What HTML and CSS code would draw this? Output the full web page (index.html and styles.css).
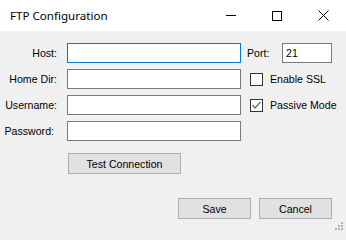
FILE: index.html
```html
<!DOCTYPE html>
<html>
<head>
<meta charset="utf-8">
<link rel="stylesheet" href="styles.css">
</head>
<body>
<div class="window">
  <div class="titlebar">
    <span class="title">FTP Configuration</span>
    <div class="caption-buttons">
      <span class="cap-btn"><svg width="10" height="10" viewBox="0 0 10 10"><line x1="0" y1="4.5" x2="10" y2="4.5" stroke="#000" stroke-width="1"/></svg></span>
      <span class="cap-btn"><svg width="10" height="10" viewBox="0 0 10 10"><rect x="0.5" y="0.5" width="9" height="9" fill="none" stroke="#000" stroke-width="1"/></svg></span>
      <span class="cap-btn"><svg width="11" height="11" viewBox="0 0 11 11"><path d="M0.5 0.5 L10.5 10.5 M10.5 0.5 L0.5 10.5" stroke="#000" stroke-width="1" fill="none"/></svg></span>
    </div>
  </div>
  <div class="client">
    <div class="form">
      <label class="lbl">Host:</label>
      <div class="field"><span class="input focused"></span></div>
      <div class="side port">
        <span class="side-text">Port:</span>
        <span class="input port-input">21</span>
      </div>

      <label class="lbl">Home Dir:</label>
      <div class="field"><span class="input"></span></div>
      <div class="side check">
        <span class="box"></span>
        <span class="side-text">Enable SSL</span>
      </div>

      <label class="lbl">Username:</label>
      <div class="field"><span class="input"></span></div>
      <div class="side check">
        <span class="box checked"><svg width="11" height="11" viewBox="0 0 11 11"><polyline points="1.5,5 4,8 9.5,2" fill="none" stroke="#6b6b6b" stroke-width="1.2"/></svg></span>
        <span class="side-text">Passive Mode</span>
      </div>

      <label class="lbl lbl-pw">Password:</label>
      <div class="field"><span class="input"></span></div>
      <div class="side"></div>
    </div>
    <div class="test-row">
      <button class="btn btn-test">Test Connection</button>
    </div>
    <div class="actions">
      <button class="btn">Save</button>
      <button class="btn">Cancel</button>
    </div>
    <svg class="grip" width="9" height="9" viewBox="0 0 9 9">
      <rect x="6" y="0" width="2" height="2" fill="#b4b4b4"/>
      <rect x="3" y="3" width="2" height="2" fill="#b4b4b4"/>
      <rect x="6" y="3" width="2" height="2" fill="#b4b4b4"/>
      <rect x="0" y="6" width="2" height="2" fill="#b4b4b4"/>
      <rect x="3" y="6" width="2" height="2" fill="#b4b4b4"/>
      <rect x="6" y="6" width="2" height="2" fill="#b4b4b4"/>
    </svg>
  </div>
</div>
</body>
</html>
```

FILE: styles.css
```css
html, body {
  margin: 0;
  padding: 0;
  background: #f0f0f0;
}

.window {
  width: 346px;
  height: 233px;
  display: flex;
  flex-direction: column;
  overflow: hidden;
  font-family: "Liberation Sans", Arial, sans-serif;
  font-size: 10.6px;
  color: #000;
}

.titlebar {
  height: 31px;
  flex: none;
  background: #fff;
  display: flex;
  align-items: center;
}

.title {
  padding-left: 10px;
  font-family: "Noto Sans", "Open Sans", sans-serif;
  font-size: 11.6px;
  color: #000;
  flex: 1;
}

.caption-buttons {
  display: flex;
  height: 31px;
}

.cap-btn {
  width: 46px;
  height: 31px;
  display: flex;
  align-items: center;
  justify-content: center;
}

.client {
  position: relative;
  flex: 1;
  background: #f0f0f0;
  padding-top: 12px;
}

.form {
  display: grid;
  grid-template-columns: 67px 174px 1fr;
  grid-auto-rows: 20px;
  row-gap: 6px;
}

.lbl {
  display: flex;
  align-items: center;
  justify-content: flex-end;
  padding-right: 10px;
}

.lbl-pw {
  padding-right: 13px;
}

.field {
  display: flex;
}

.input {
  box-sizing: border-box;
  display: flex;
  align-items: center;
  width: 100%;
  height: 20px;
  background: #fff;
  border: 1px solid #7a7a7a;
  padding-left: 2px;
}

.input.focused {
  border-color: #0078d7;
}

.side {
  display: flex;
  align-items: center;
}

.port {
  padding-left: 6px;
}

.port-input {
  width: 50px;
  margin-left: auto;
  margin-right: 14px;
  padding-left: 3px;
}

.check {
  padding-left: 9px;
  gap: 7px;
}

.box {
  box-sizing: border-box;
  width: 13px;
  height: 13px;
  border: 1px solid #333;
  background: #fff;
  display: flex;
  align-items: center;
  justify-content: center;
}

.box svg {
  display: block;
}

.test-row {
  margin-top: 12px;
  padding-left: 68px;
  display: flex;
}

.btn {
  box-sizing: border-box;
  height: 21px;
  width: 73px;
  background: #e1e1e1;
  border: 1px solid #adadad;
  font-family: "Liberation Sans", Arial, sans-serif;
  font-size: 10.6px;
  color: #000;
  padding: 0;
  margin: 0;
}

.btn-test {
  width: 113px;
}

.actions {
  margin-top: 24px;
  display: flex;
  justify-content: flex-end;
  gap: 8px;
  padding-right: 14px;
}

.grip {
  position: absolute;
  right: 2px;
  bottom: 2px;
}
```
